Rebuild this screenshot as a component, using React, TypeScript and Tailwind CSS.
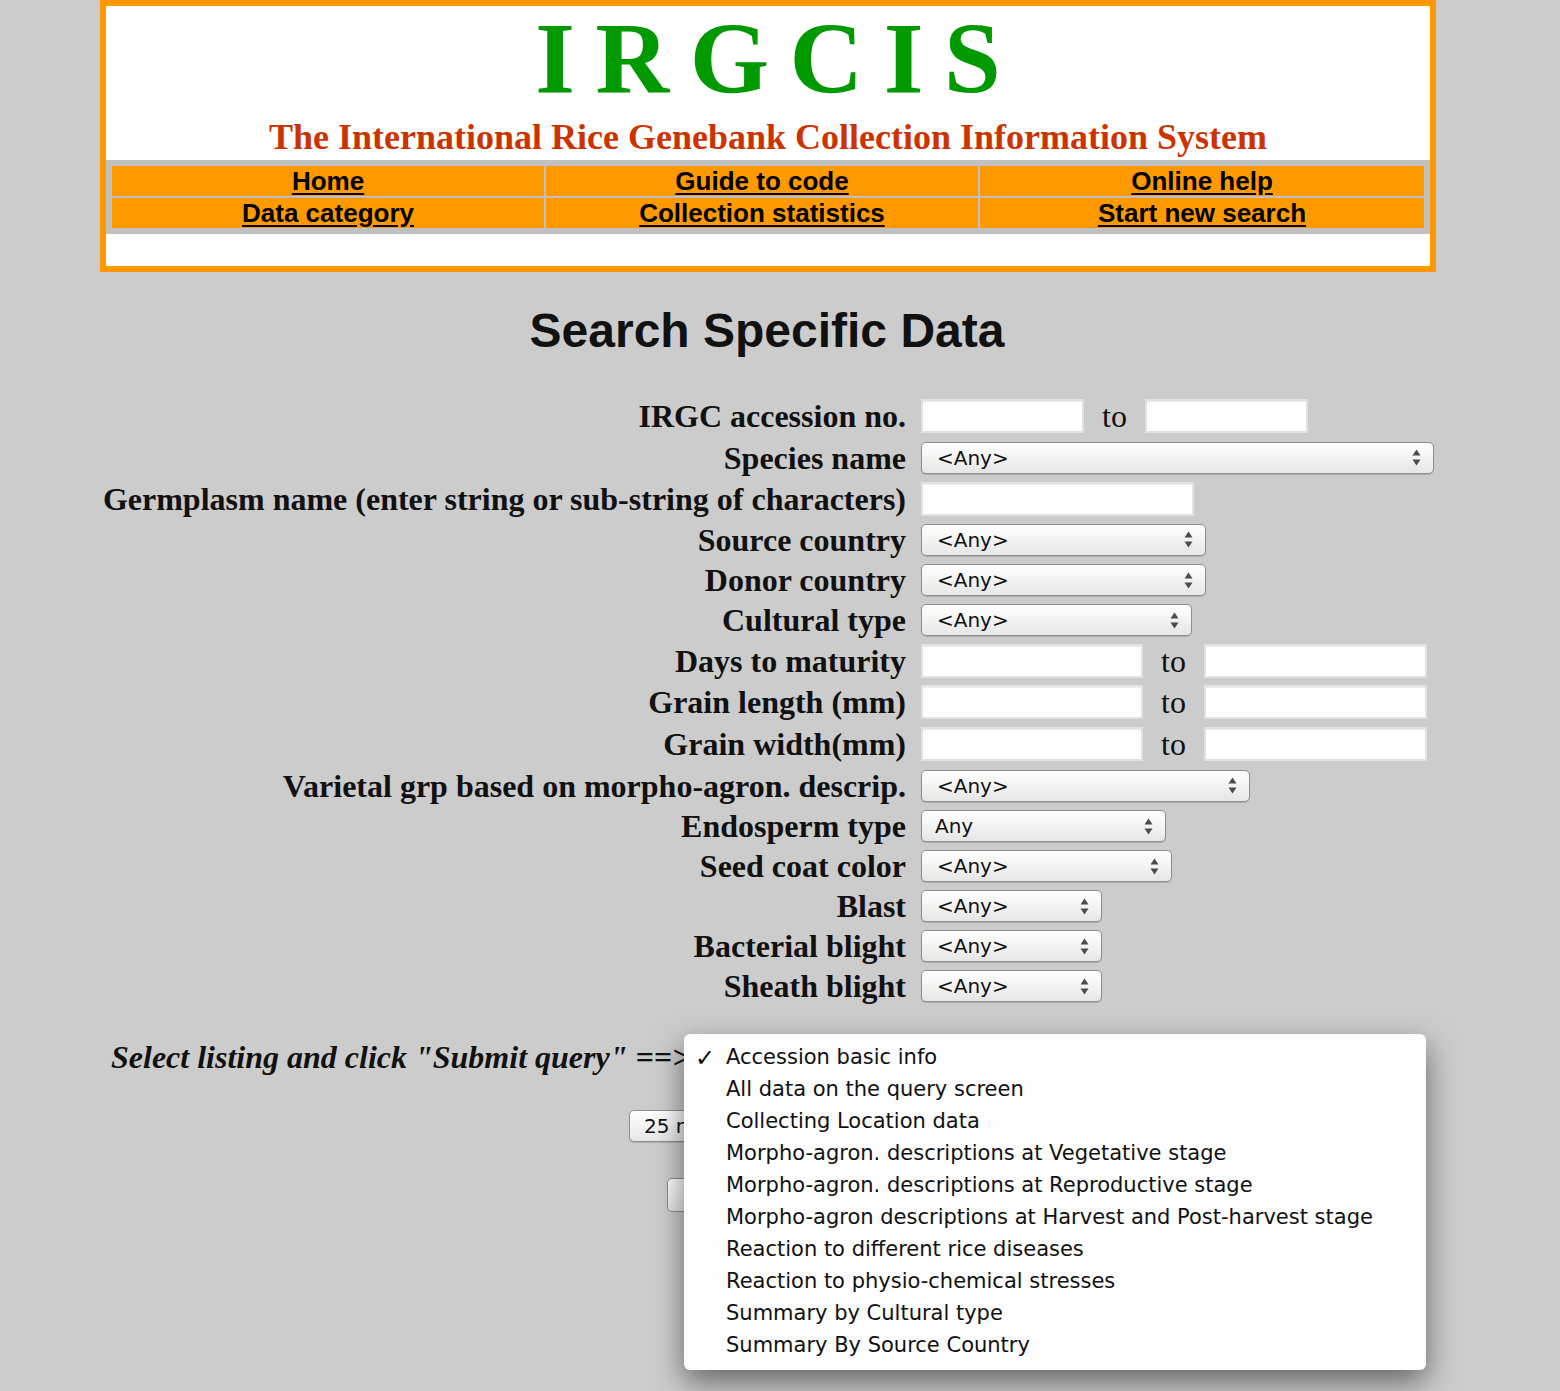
const serif = { fontFamily: '"Liberation Serif", "Times New Roman", serif' }
const sans = { fontFamily: '"Liberation Sans", Arial, sans-serif' }
const ui = { fontFamily: '"DejaVu Sans", Verdana, sans-serif' }

const navLinks = ['Home', 'Guide to code', 'Online help', 'Data category', 'Collection statistics', 'Start new search']

const listings = [
  'Accession basic info',
  'All data on the query screen',
  'Collecting Location data',
  'Morpho-agron. descriptions at Vegetative stage',
  'Morpho-agron. descriptions at Reproductive stage',
  'Morpho-agron descriptions at Harvest and Post-harvest stage',
  'Reaction to different rice diseases',
  'Reaction to physio-chemical stresses',
  'Summary by Cultural type',
  'Summary By Source Country',
]

function Arrows() {
  return (
    <svg width="9" height="17" viewBox="0 0 9 17" className="shrink-0">
      <path d="M4.5 0.5 L8.5 6.5 L0.5 6.5 Z" fill="#4a4a4a" />
      <path d="M0.5 10.5 L8.5 10.5 L4.5 16.5 Z" fill="#4a4a4a" />
    </svg>
  )
}

function FakeSelect({ width, value = '<Any>', pl = 'pl-[15px]' }: { width: string; value?: string; pl?: string }) {
  return (
    <div
      className={`${width} ${pl} h-[32px] pr-[12px] flex items-center justify-between rounded-[5px] border border-[#8e8e8e] bg-gradient-to-b from-white via-[#f3f3f3] to-[#e6e6e6] shadow-[0_1px_1px_rgba(0,0,0,0.15)] text-[20px] text-[#111]`}
      style={ui}
    >
      <span className="leading-none whitespace-nowrap">{value}</span>
      <Arrows />
    </div>
  )
}

function TextBox({ width }: { width: string }) {
  return <div className={`${width} h-[34px] bg-white border-2 border-[#e2e2e2] shadow-[inset_0_1px_1px_rgba(0,0,0,0.08)]`} />
}

function To() {
  return (
    <span className="mx-[18px] text-[32px] leading-none text-[#111]" style={serif}>
      to
    </span>
  )
}

function Row({ label, h, children }: { label: string; h: string; children: React.ReactNode }) {
  return (
    <div className={`flex items-center ${h}`}>
      <div className="w-[808px] pr-[2px] text-right text-[32px] leading-none font-bold text-[#111]" style={serif}>
        {label}
      </div>
      <div className="ml-[13px] flex items-center">{children}</div>
    </div>
  )
}

export default function App() {
  return (
    <div className="min-h-[1391px] bg-[#cccccc] overflow-hidden">
      <header className="ml-[100px] w-[1336px] border-[6px] border-[#ff9900] bg-white">
        <h1
          className="pt-[2px] text-center text-[102px] leading-[102px] font-bold text-[#009900] [word-spacing:-5px]"
          style={serif}
        >
          I R G C I S
        </h1>
        <p className="mt-[9px] text-center text-[36px] leading-[36px] font-bold text-[#cc3300]" style={serif}>
          The International Rice Genebank Collection Information System
        </p>
        <nav className="mt-[5px] bg-[#c0c0c0] p-[6px] grid grid-cols-[432px_432px_1fr] gap-[2px]">
          {navLinks.map((l) => (
            <div key={l} className="h-[30px] bg-[#ff9900] flex items-center justify-center">
              <a href="#" className="text-[26px] leading-none font-bold text-black underline underline-offset-[3px]" style={sans}>
                {l}
              </a>
            </div>
          ))}
        </nav>
        <div className="h-[32px]" />
      </header>

      <h2 className="mt-[31px] ml-[-26px] text-center text-[48px] leading-[56px] font-bold text-[#111]" style={sans}>
        Search Specific Data
      </h2>

      <form className="mt-[36px] ml-[100px]">
        <Row label="IRGC accession no." h="h-[42px]">
          <TextBox width="w-[163px]" />
          <To />
          <TextBox width="w-[163px]" />
        </Row>
        <Row label="Species name" h="h-[41px]">
          <FakeSelect width="w-[513px]" />
        </Row>
        <Row label="Germplasm name (enter string or sub-string of characters)" h="h-[41px]">
          <TextBox width="w-[273px]" />
        </Row>
        <Row label="Source country" h="h-[41px]">
          <FakeSelect width="w-[285px]" />
        </Row>
        <Row label="Donor country" h="h-[40px]">
          <FakeSelect width="w-[285px]" />
        </Row>
        <Row label="Cultural type" h="h-[40px]">
          <FakeSelect width="w-[271px]" />
        </Row>
        <Row label="Days to maturity" h="h-[41px]">
          <TextBox width="w-[222px]" />
          <To />
          <TextBox width="w-[223px]" />
        </Row>
        <Row label="Grain length (mm)" h="h-[42px]">
          <TextBox width="w-[222px]" />
          <To />
          <TextBox width="w-[223px]" />
        </Row>
        <Row label="Grain width(mm)" h="h-[42px]">
          <TextBox width="w-[222px]" />
          <To />
          <TextBox width="w-[223px]" />
        </Row>
        <Row label="Varietal grp based on morpho-agron. descrip." h="h-[41px]">
          <FakeSelect width="w-[329px]" />
        </Row>
        <Row label="Endosperm type" h="h-[40px]">
          <FakeSelect width="w-[245px]" value="Any" pl="pl-[13px]" />
        </Row>
        <Row label="Seed coat color" h="h-[40px]">
          <FakeSelect width="w-[251px]" />
        </Row>
        <Row label="Blast" h="h-[40px]">
          <FakeSelect width="w-[181px]" />
        </Row>
        <Row label="Bacterial blight" h="h-[40px]">
          <FakeSelect width="w-[181px]" />
        </Row>
        <Row label="Sheath blight" h="h-[40px]">
          <FakeSelect width="w-[181px]" />
        </Row>
      </form>

      <div className="relative mt-[31px] h-[40px] pl-[111px] flex items-center">
        <span className="text-[32px] leading-none font-bold italic text-[#111]" style={serif}>
          Select listing and click "Submit query" ==&gt;
        </span>
        <div
          className="absolute left-[684px] top-[-3px] z-10 w-[742px] pt-[8px] pb-[8px] rounded-[6px] bg-[#fdfdfd] shadow-[0_12px_30px_rgba(0,0,0,0.5)]"
          style={ui}
        >
          {listings.map((item, i) => (
            <div key={item} className="relative h-[32px] pl-[42px] flex items-center text-[21px] text-[#111]">
              {i === 0 && <span className="absolute left-[11px] text-[24px] font-bold leading-none">✓</span>}
              {item}
            </div>
          ))}
        </div>
      </div>

      <div className="mt-[33px] ml-[629px]">
        <FakeSelect width="w-[300px]" value="25 records per page" pl="pl-[14px]" />
      </div>
      <div className="mt-[36px] ml-[667px]">
        <button
          type="button"
          className="w-[226px] h-[34px] rounded-[5px] border border-[#8e8e8e] bg-gradient-to-b from-white to-[#e6e6e6] text-[20px]"
          style={ui}
        >
          Submit query
        </button>
      </div>
    </div>
  )
}
